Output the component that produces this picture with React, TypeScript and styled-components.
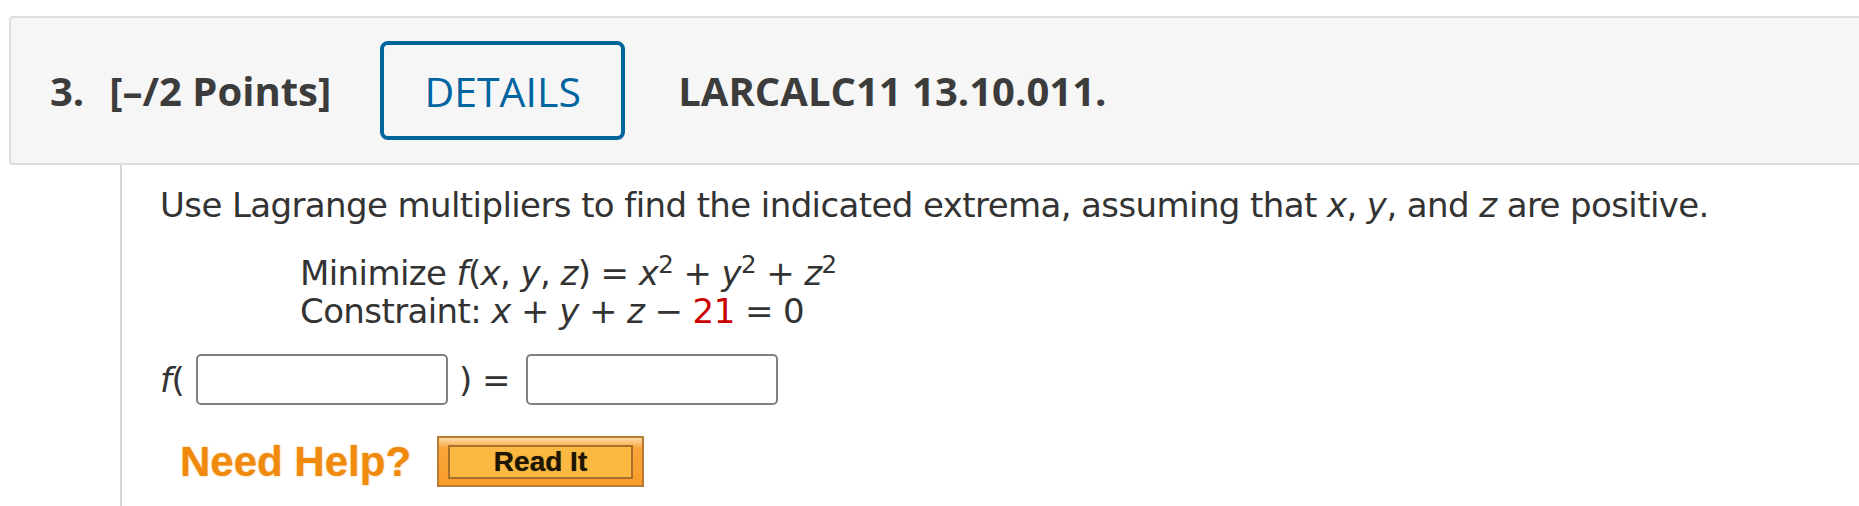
import styled, { createGlobalStyle } from 'styled-components';

const GlobalStyle = createGlobalStyle`
	html, body {
		margin: 0;
		padding: 0;
		background: #ffffff;
		overflow: hidden;
	}
`;

const Page = styled.div`
	padding-top: 16px;
	min-height: 506px;
	box-sizing: border-box;
	display: flex;
	flex-direction: column;
`;

const Header = styled.header`
	margin-left: 9px;
	height: 149px;
	box-sizing: border-box;
	display: flex;
	align-items: center;
	padding-left: 39px;
	background: #f6f6f6;
	border: 2px solid #dedede;
	border-right: 0;
	border-radius: 4px 0 0 4px;
	font-family: 'Open Sans', sans-serif;
	font-size: 40px;
	color: #3c3c3c;
`;

const Number = styled.span`
	font-weight: 700;
	margin-right: 25px;
`;

const Points = styled.span`
	font-weight: 700;
	margin-right: 49px;
`;

const DetailsButton = styled.button`
	width: 245px;
	height: 99px;
	box-sizing: border-box;
	border: 4px solid #00659c;
	border-radius: 8px;
	background: transparent;
	color: #0064a0;
	font-family: 'Open Sans', sans-serif;
	font-size: 41px;
	font-weight: 400;
	padding: 0;
	margin-right: 53px;
`;

const Code = styled.span`
	font-weight: 700;
`;

const Content = styled.section`
	flex: 1;
	margin-left: 120px;
	border-left: 2px solid #d4d4d4;
	padding: 21px 0 0 38px;
	font-family: 'DejaVu Sans', Verdana, sans-serif;
	font-size: 34px;
	line-height: 38px;
	letter-spacing: -0.6px;
	color: #333333;
`;

const Prompt = styled.p`
	margin: 0;
`;

const Problem = styled.div`
	margin: 30px 0 0 140px;
`;

const Line = styled.div``;

const V = styled.i`
	font-style: italic;
`;

const Sup = styled.sup`
	font-size: 0.72em;
	line-height: 0;
	vertical-align: 0.5em;
`;

const Red = styled.span`
	color: #cc0000;
`;

const AnswerRow = styled.div`
	display: flex;
	align-items: center;
	margin-top: 24px;
	height: 51px;
`;

const Paren = styled.span<{ before?: number; after: number }>`
	margin-left: ${(p) => p.before ?? 0}px;
	margin-right: ${(p) => p.after}px;
`;

const AnswerBox = styled.input`
	width: 252px;
	height: 51px;
	box-sizing: border-box;
	border: 2px solid #808080;
	border-radius: 5px;
	background: #ffffff;
	padding: 0 8px;
	font: inherit;
	outline: none;
`;

const HelpRow = styled.div`
	display: flex;
	align-items: center;
	margin: 31px 0 0 20px;
	letter-spacing: 0;
`;

const NeedHelp = styled.span`
	font-family: 'Liberation Sans', Arial, sans-serif;
	font-weight: 700;
	font-size: 42px;
	line-height: 51px;
	color: #f08a0c;
	text-shadow: 0 0 2px rgba(240, 138, 12, 0.6);
	margin-right: 26px;
`;

const ReadItButton = styled.button`
	width: 207px;
	height: 51px;
	box-sizing: border-box;
	padding: 7px 9px 6px;
	border: 2px solid #b87b34;
	background: linear-gradient(#fcd9a6 0%, #f9a53a 22%, #f89c2a 100%);
	display: flex;
`;

const ReadItInner = styled.span`
	flex: 1;
	display: flex;
	align-items: center;
	justify-content: center;
	border: 2px solid #a8702a;
	background: #fbb942;
	font-family: 'Liberation Sans', Arial, sans-serif;
	font-weight: 700;
	font-size: 28px;
	color: #1e1600;
	text-shadow: 0 0 1px rgba(0, 0, 0, 0.6);
`;

export default function App() {
	return (
		<>
			<GlobalStyle />
			<Page>
				<Header>
					<Number>3.</Number>
					<Points>[–/2 Points]</Points>
					<DetailsButton>DETAILS</DetailsButton>
					<Code>LARCALC11 13.10.011.</Code>
				</Header>
				<Content>
					<Prompt>
						Use Lagrange multipliers to find the indicated extrema, assuming that <V>x</V>, <V>y</V>, and <V>z</V> are positive.
					</Prompt>
					<Problem>
						<Line>
							Minimize <V>f</V>(<V>x</V>, <V>y</V>, <V>z</V>) = <V>x</V>
							<Sup>2</Sup> + <V>y</V>
							<Sup>2</Sup> + <V>z</V>
							<Sup>2</Sup>
						</Line>
						<Line>
							Constraint: <V>x</V> + <V>y</V> + <V>z</V> − <Red>21</Red> = 0
						</Line>
					</Problem>
					<AnswerRow>
						<Paren after={12}>
							<V>f</V>(
						</Paren>
						<AnswerBox type="text" />
						<Paren before={11} after={16}>
							) =
						</Paren>
						<AnswerBox type="text" />
					</AnswerRow>
					<HelpRow>
						<NeedHelp>Need Help?</NeedHelp>
						<ReadItButton>
							<ReadItInner>Read It</ReadItInner>
						</ReadItButton>
					</HelpRow>
				</Content>
			</Page>
		</>
	);
}
